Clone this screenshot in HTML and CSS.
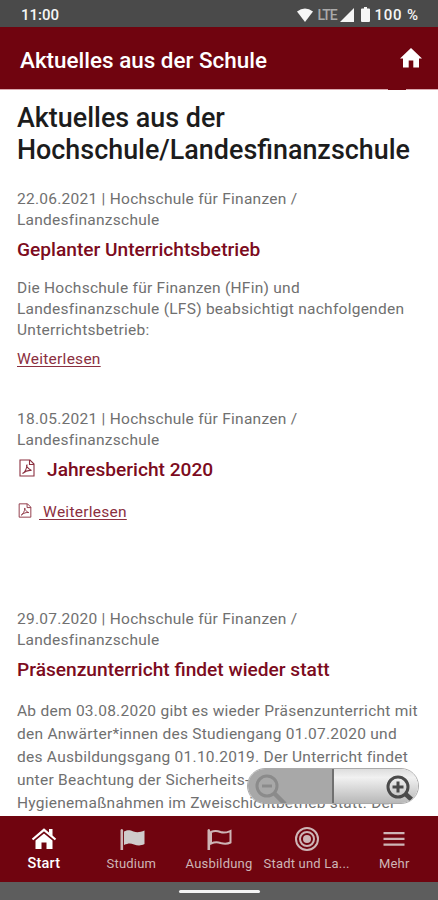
FILE: index.html
```html
<!DOCTYPE html>
<html lang="de">
<head>
<meta charset="utf-8">
<title>Aktuelles aus der Schule</title>
<link rel="stylesheet" href="styles.css">
</head>
<body>
<div class="app">
  <div class="status">
    <span class="time">11:00</span>
    <div class="indicators">
      <svg class="wifi" viewBox="0 0 16 14"><path d="M0 3.400Q8-2.600 16 3.400L8 14z"/></svg>
      <span class="lte">LTE</span>
      <svg class="signal" viewBox="0 0 14 14"><path d="M14 0v14H0z"/></svg>
      <svg class="battery" viewBox="0 0 9 15"><path d="M3 0h3v1.600h2q1 0 1 1V14q0 1-1 1H1q-1 0-1-1V2.600q0-1 1-1h2z"/></svg>
      <span class="percent">100 %</span>
    </div>
  </div>
  <header class="header">
    <span class="title">Aktuelles aus der Schule</span>
    <svg class="home" viewBox="0 0 22 20"><path d="M11 0L22 10.500h-3V19.500h-5.700v-7H8.700v7H3v-9H0z"/></svg>
    <i class="notch"></i>
  </header>
  <main class="content">
    <h1>Aktuelles aus der<br>Hochschule/Landesfinanzschule</h1>
    <article class="first">
      <p class="meta">22.06.2021 | Hochschule für Finanzen /<br>Landesfinanzschule</p>
      <h2>Geplanter Unterrichtsbetrieb</h2>
      <p class="text">Die Hochschule für Finanzen (HFin) und<br>Landesfinanzschule (LFS) beabsichtigt nachfolgenden<br>Unterrichtsbetrieb:</p>
      <p class="more"><a>Weiterlesen</a></p>
    </article>
    <article class="second">
      <p class="meta">18.05.2021 | Hochschule für Finanzen /<br>Landesfinanzschule</p>
      <h2><svg class="pdf" viewBox="0 0 16 18"><path d="M1 1h10l4 4v12H1zM10.500 1v4.500H15M3.500 14.500c2-1 4-4.500 4.500-8.500-1 0-.5 3 4.500 5.500-3-.5-6 .5-9 3z"/></svg>Jahresbericht 2020</h2>
      <p class="more"><svg class="pdf small" viewBox="0 0 16 18"><path d="M1 1h10l4 4v12H1zM10.500 1v4.500H15M3.500 14.500c2-1 4-4.500 4.500-8.500-1 0-.5 3 4.500 5.500-3-.5-6 .5-9 3z"/></svg><a>&nbsp;Weiterlesen</a></p>
    </article>
    <article class="third">
      <p class="meta">29.07.2020 | Hochschule für Finanzen /<br>Landesfinanzschule</p>
      <h2>Präsenzunterricht findet wieder statt</h2>
      <p class="text wide">Ab dem 03.08.2020 gibt es wieder Präsenzunterricht mit<br>den Anwärter*innen des Studiengang 01.07.2020 und<br>des Ausbildungsgang 01.10.2019. Der Unterricht findet<br>unter Beachtung der Sicherheits- und<br>Hygienemaßnahmen im Zweischichtbetrieb statt. Der</p>
    </article>
    <div class="zoom">
      <div class="zoom-out"><svg viewBox="0 0 32 32"><circle cx="12" cy="12" r="10"/><path d="M7 12h10"/><path class="handle" d="M19 19l11 11"/></svg></div>
      <div class="zoom-in"><svg viewBox="0 0 32 32"><circle cx="12" cy="12" r="10"/><path d="M6.500 12h11M12 6.500v11"/><path class="handle" d="M19.500 19l6 5.500"/></svg></div>
    </div>
  </main>
  <nav class="tabs">
    <div class="tab active"><svg viewBox="0 0 26 24"><path d="M1.500 12.500L13 2.800l11.500 9.700" fill="none" stroke="currentColor" stroke-width="2.200"/><path d="M18 2h3.500v7L18 6zM13 6.500l8.500 7V22h-6v-6.500h-5V22h-6v-8.500z"/></svg><span>Start</span></div>
    <div class="tab flag"><svg viewBox="0 0 26 24"><path d="M1.500 3q1.300-2 2.600 0v20H1.500z"/><path class="cloth" d="M5 4.500c4-2 6-1.500 9.500 0 4 1.500 7 .5 11-1V17c-4 2-7 1.500-10.500.5-4-1.500-6-1-10 .5z"/></svg><span>Studium</span></div>
    <div class="tab flag"><svg viewBox="0 0 26 24"><path d="M1.500 3q1.300-2 2.600 0v20H1.500z"/><path d="M5 5c4-2 6-1.500 9.500 0 4 1.500 6 .5 10-1V15.500c-4 2-6.500 1.500-10 .5-4-1.500-6-1-9.500.500z" fill="none" stroke="currentColor" stroke-width="2"/></svg><span>Ausbildung</span></div>
    <div class="tab"><svg viewBox="0 0 26 24"><circle cx="13" cy="12" r="4"/><g fill="none" stroke="currentColor" stroke-width="2"><circle cx="13" cy="12" r="7"/><circle cx="13" cy="12" r="11"/></g></svg><span>Stadt und La...</span></div>
    <div class="tab"><svg viewBox="0 0 26 24"><path d="M2.500 5h21v2.300h-21zm0 5.700h21V13h-21zm0 5.700h21v2.300h-21z"/></svg><span>Mehr</span></div>
  </nav>
  <footer class="gesture"><i></i></footer>
</div>
</body>
</html>
```
FILE: styles.css
```css
* { box-sizing: border-box; margin: 0; padding: 0; }
body { font-family: Roboto, "Liberation Sans", sans-serif; background: #fff; overflow: hidden; }
svg { display: block; fill: currentColor; flex: none; }
.app { width: 438px; height: 900px; display: flex; flex-direction: column; }
.status { height: 27px; flex: none; background: #4a4a4a; color: #f6f6f6; display: flex; align-items: center; justify-content: space-between; padding: 2px 20px 0 21px; }
.time, .percent { font-size: 15px; font-weight: 500; line-height: 20px; }
.percent { letter-spacing: .8px; margin-right: -.8px; }
.indicators { display: flex; align-items: center; }
.wifi { width: 16px; height: 14px; margin-right: 4px; }
.lte { font-size: 14px; line-height: 20px; width: 21px; color: #aaa; letter-spacing: -1px; margin-right: 2px; font-weight: 500; }
.signal { width: 14px; height: 14px; margin-right: 7px; }
.battery { width: 9px; height: 15px; margin-right: 4px; }
.header { height: 63px; flex: none; background: #70040f; color: #fff; border-bottom: 1px solid #d9a9ae; display: flex; align-items: center; justify-content: space-between; padding: 4px 16px 0 20px; position: relative; }
.title { font-size: 22.45px; font-weight: 500; }
.home { width: 22px; height: 20px; margin-top: -5px; }
.notch { position: absolute; right: 32px; bottom: -1px; width: 18px; height: 1px; background: #70040f; }
.content { flex: 1; min-height: 0; overflow: hidden; position: relative; padding: 12px 0 0 17px; white-space: nowrap; }
h1 { font-size: 26.9px; line-height: 32px; font-weight: 500; color: #1c1c1c; }
.first { margin-top: 23px; height: 220px; }
.second { height: 200px; }
.meta, .text, .more { font-size: 15.5px; line-height: 20.5px; letter-spacing: .26px; color: #707070; }
h2 { font-size: 19.15px; line-height: 24px; font-weight: 500; color: #7c0b20; margin-top: 8px; display: flex; align-items: center; }
.text { margin-top: 16px; line-height: 21px; }
.text.wide { line-height: 23px; margin-top: 18px; }
.more { color: #8b3040; margin-top: 8px; display: flex; align-items: center; }
.more a { text-decoration: underline; text-underline-offset: 2px; }
.second .more { margin-top: 20px; }
.pdf { width: 16px; height: 18px; fill: none; stroke: #8b3040; stroke-width: 1.100; margin: -5px 12px 0 2px; }
.pdf.small { width: 14px; height: 15px; margin: -4px 7px 0 1px; }
.zoom { position: absolute; left: 247px; top: 678px; width: 172px; height: 36px; border-radius: 18px; display: flex; overflow: hidden; border: 1px solid #aaa; }
.zoom-out { width: 86px; background: #a8a8a8; border-right: 2px solid #707070; color: #8b8b8b; padding: 5px 0 0 7px; }
.zoom-in { flex: 1; background: linear-gradient(#ddd, #f1f1f1 25%, #b8b8b8); color: #4a4a4a; padding: 6px 0 0 52px; }
.zoom svg { width: 32px; height: 32px; fill: none; stroke: currentColor; stroke-width: 3; }
.zoom .handle { stroke-width: 4.500; }
.tabs { height: 66px; flex: none; background: #70040f; display: grid; grid-template-columns: repeat(5, 1fr); color: #ceb5b6; }
.tab { display: flex; flex-direction: column; align-items: center; padding-top: 11px; }
.tab svg { width: 26px; height: 24px; }
.flag svg { margin-right: -1px; }
.cloth { fill: #cfcbcb; }
.tab span { font-size: 13px; line-height: 18px; margin-top: 4px; letter-spacing: .2px; white-space: nowrap; }
.tab.active { color: #fff; }
.tab.active span { font-size: 14.500px; font-weight: 500; }
.gesture { height: 18px; flex: none; background: #5d5d5d; display: flex; justify-content: center; padding-top: 8px; }
.gesture i { width: 81px; height: 3px; border-radius: 2px; background: #f4f4f4; }
```
